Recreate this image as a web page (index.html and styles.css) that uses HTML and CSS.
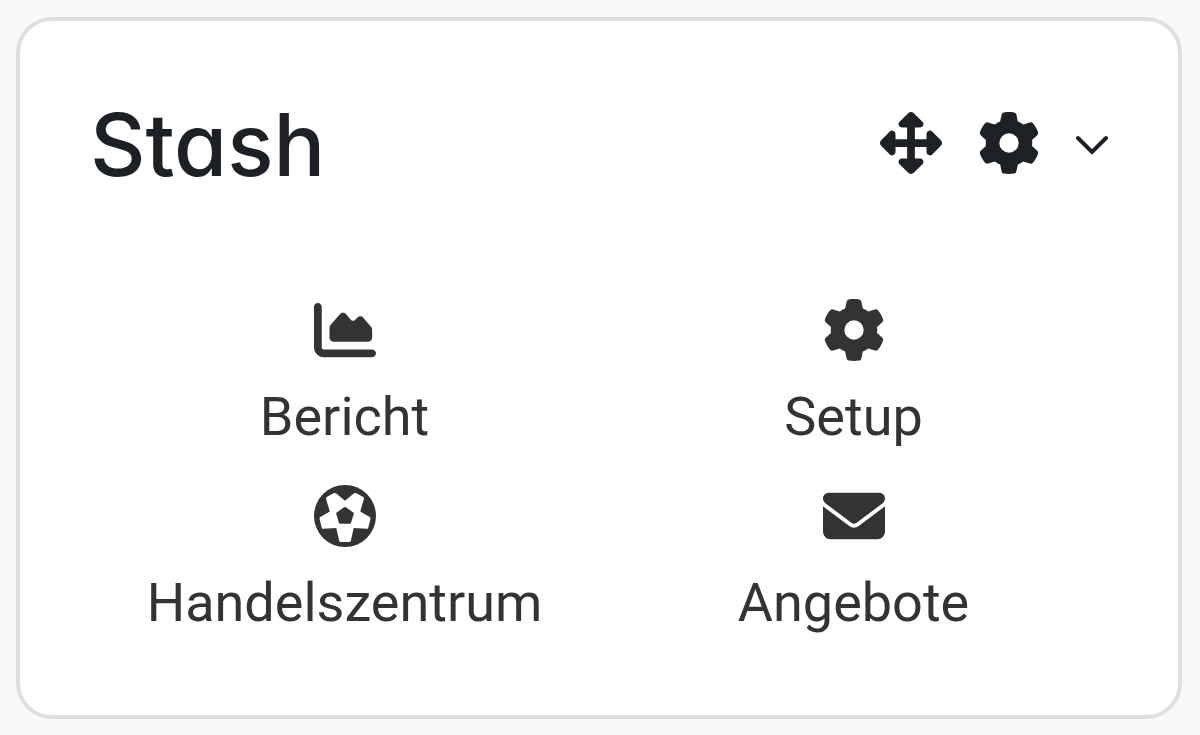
FILE: index.html
```html
<!DOCTYPE html>
<html lang="de">

<head>
    <meta charset="UTF-8">
    <meta name="viewport" content="width=device-width, initial-scale=1.0">
    <title>Stash</title>
    <link rel="stylesheet" href="styles.css">
</head>

<body>
    <!-- Shared icons -->
    <svg class="sprite" aria-hidden="true">
        <symbol id="icon-gear" viewBox="0 0 512 512">
            <path d="M495.9 166.6c3.2 8.7 .5 18.4-6.4 24.6l-43.3 39.4c1.1 8.3 1.7 16.8 1.7 25.4s-.6 17.1-1.7 25.4l43.3 39.4c6.9 6.2 9.6 15.9 6.4 24.6c-4.4 11.9-9.7 23.3-15.8 34.3l-4.7 8.1c-6.6 11-14 21.4-22.1 31.2c-5.9 7.2-15.7 9.6-24.5 6.8l-55.7-17.7c-13.4 10.3-28.2 18.9-44 25.4l-12.5 57.1c-2 9.1-9 16.3-18.2 17.8c-13.8 2.3-28 3.5-42.5 3.5s-28.7-1.2-42.5-3.5c-9.2-1.5-16.2-8.7-18.2-17.8l-12.5-57.1c-15.8-6.5-30.6-15.1-44-25.4L83.1 425.9c-8.8 2.8-18.6 .3-24.5-6.8c-8.1-9.8-15.5-20.2-22.1-31.2l-4.7-8.1c-6.1-11-11.4-22.4-15.8-34.3c-3.2-8.7-.5-18.4 6.4-24.6l43.3-39.4C64.6 273.1 64 264.6 64 256s.6-17.1 1.7-25.4L22.4 191.2c-6.9-6.2-9.6-15.9-6.4-24.6c4.4-11.9 9.7-23.3 15.8-34.3l4.7-8.1c6.6-11 14-21.4 22.1-31.2c5.9-7.2 15.7-9.6 24.5-6.8l55.7 17.7c13.4-10.3 28.2-18.9 44-25.4l12.5-57.1c2-9.1 9-16.3 18.2-17.8C227.3 1.2 241.5 0 256 0s28.7 1.2 42.5 3.5c9.2 1.5 16.2 8.7 18.2 17.8l12.5 57.1c15.8 6.5 30.6 15.1 44 25.4l55.7-17.7c8.8-2.8 18.6-.3 24.5 6.8c8.1 9.8 15.5 20.2 22.1 31.2l4.7 8.1c6.1 11 11.4 22.4 15.8 34.3zM256 336a80 80 0 1 0 0-160 80 80 0 1 0 0 160z"/>
        </symbol>
    </svg>

    <section class="card">
        <header class="card-header">
            <h1>Stash</h1>
            <div class="actions">
                <button type="button" aria-label="Verschieben">
                    <svg class="icon" viewBox="0 0 512 512">
                        <path d="M278.6 9.4c-12.5-12.5-32.8-12.5-45.3 0l-72 72c-9.2 9.2-9.9 18.9-4.9 30.9s14.6 15.8 27.6 15.8h40v96H128V184c0-12.9-5.8-22.6-17.8-27.6s-19.7-4.2-28.9 4.9l-72 72c-12.5 12.5-12.5 32.8 0 45.3l72 72c9.2 9.2 16.9 9.9 28.9 4.9s17.8-14.6 17.8-27.6V288h96v96H184c-12.9 0-22.6 3.8-27.6 15.8s-4.2 21.7 4.9 30.9l72 72c12.5 12.5 32.8 12.5 45.3 0l72-72c9.2-9.2 9.9-18.9 4.9-30.9s-14.6-15.8-27.6-15.8H288V288h96v40c0 12.9 5.8 22.6 17.8 27.6s19.7 4.2 28.9-4.9l72-72c12.5-12.5 12.5-32.8 0-45.3l-72-72c-9.2-9.2-16.9-9.9-28.9-4.9s-17.8 14.6-17.8 27.6v40H288V128h40c12.9 0 22.6-3.8 27.6-15.8s4.2-21.7-4.9-30.9l-72-72z"/>
                    </svg>
                </button>
                <button type="button" aria-label="Einstellungen">
                    <svg class="icon"><use href="#icon-gear"/></svg>
                </button>
                <button type="button" aria-label="Einklappen">
                    <svg class="chevron" viewBox="0 0 32 24">
                        <path d="M2 7l14 14L30 7"/>
                    </svg>
                </button>
            </div>
        </header>

        <nav class="links">
            <a href="#bericht">
                <svg class="icon" viewBox="0 0 512 512">
                    <path d="M64 64c0-17.7-14.3-32-32-32S0 46.3 0 64V400c0 44.2 35.8 80 80 80H480c17.7 0 32-14.3 32-32s-14.3-32-32-32H80c-8.8 0-16-7.2-16-16V64zm96 288H448c17.7 0 32-14.3 32-32V251.8c0-7.6-2.7-15-7.7-20.8l-65.8-76.8c-12.1-14.2-33.7-15-46.9-1.8l-21 21c-10 10-26.4 9.2-35.4-1.6l-39.2-47c-12.6-15.1-35.7-15.4-48.7-.6L135.9 215c-5.1 5.8-7.9 13.3-7.9 21.1v84c0 17.7 14.3 32 32 32z"/>
                </svg>
                <span>Bericht</span>
            </a>
            <a href="#setup">
                <svg class="icon"><use href="#icon-gear"/></svg>
                <span>Setup</span>
            </a>
            <a href="#handelszentrum">
                <svg class="icon" viewBox="0 0 512 512">
                    <path fill-rule="evenodd" d="M256 0a256 256 0 1 0 0 512 256 256 0 1 0 0-512zM256 130L326 72Q338 62 350 68L404 98Q414 104 412 116L382 218L460 264Q468 270 466 280L448 352Q446 362 436 362L328 356L304 460Q302 470 292 470H220Q210 470 208 460L184 356L76 362Q66 362 64 352L46 280Q44 270 52 264L130 218L100 116Q98 104 108 98L162 68Q174 62 186 72zM248 184Q256 178 264 184L324 227Q331 232 328 240L306 312Q303 320 295 320H217Q209 320 206 312L184 240Q181 232 188 227z"/>
                </svg>
                <span>Handelszentrum</span>
            </a>
            <a href="#angebote">
                <svg class="icon" viewBox="0 0 512 512">
                    <path d="M48 64C21.5 64 0 85.5 0 112c0 15.1 7.1 29.3 19.2 38.4L236.8 313.6c11.4 8.5 27 8.5 38.4 0L492.8 150.4c12.1-9.1 19.2-23.3 19.2-38.4c0-26.5-21.5-48-48-48H48zM0 176V384c0 35.3 28.7 64 64 64H448c35.3 0 64-28.7 64-64V176L294.4 339.2c-22.8 17.1-54 17.1-76.8 0L0 176z"/>
                </svg>
                <span>Angebote</span>
            </a>
        </nav>
    </section>
</body>

</html>
```

FILE: styles.css
```css
body {
    font-family: Roboto, Arial, sans-serif;
    background-color: #f8f9fb;
    color: #1d2125;
    margin: 0;
    padding: 17px 18px 16px 16px;
}

.sprite {
    display: none;
}

.card {
    background-color: #fff;
    border: 4px solid #dfdfdf;
    border-radius: 36px;
    padding: 68px 70px 72px;
}

.card-header {
    display: flex;
    justify-content: space-between;
    align-items: center;
    margin-bottom: 102px;
}

h1 {
    font-family: Inter, sans-serif;
    font-feature-settings: "cv11";
    font-size: 86px;
    font-weight: 500;
    line-height: 104px;
    margin: 0;
    padding-top: 4px;
}

.actions {
    display: flex;
    align-items: center;
    gap: 36px;
}

button {
    display: flex;
    background: none;
    border: none;
    color: inherit;
    padding: 0;
    cursor: pointer;
}

.icon {
    width: 62px;
    height: 62px;
    fill: currentColor;
}

.chevron {
    width: 32px;
    height: 24px;
    fill: none;
    stroke: currentColor;
    stroke-width: 4;
    stroke-linecap: round;
}

.links {
    display: grid;
    grid-template-columns: 1fr 1fr;
    row-gap: 28px;
}

.links a {
    display: flex;
    flex-direction: column;
    align-items: center;
    gap: 16px;
    color: #333;
    font-size: 54px;
    line-height: 80px;
    text-decoration: none;
}
```
